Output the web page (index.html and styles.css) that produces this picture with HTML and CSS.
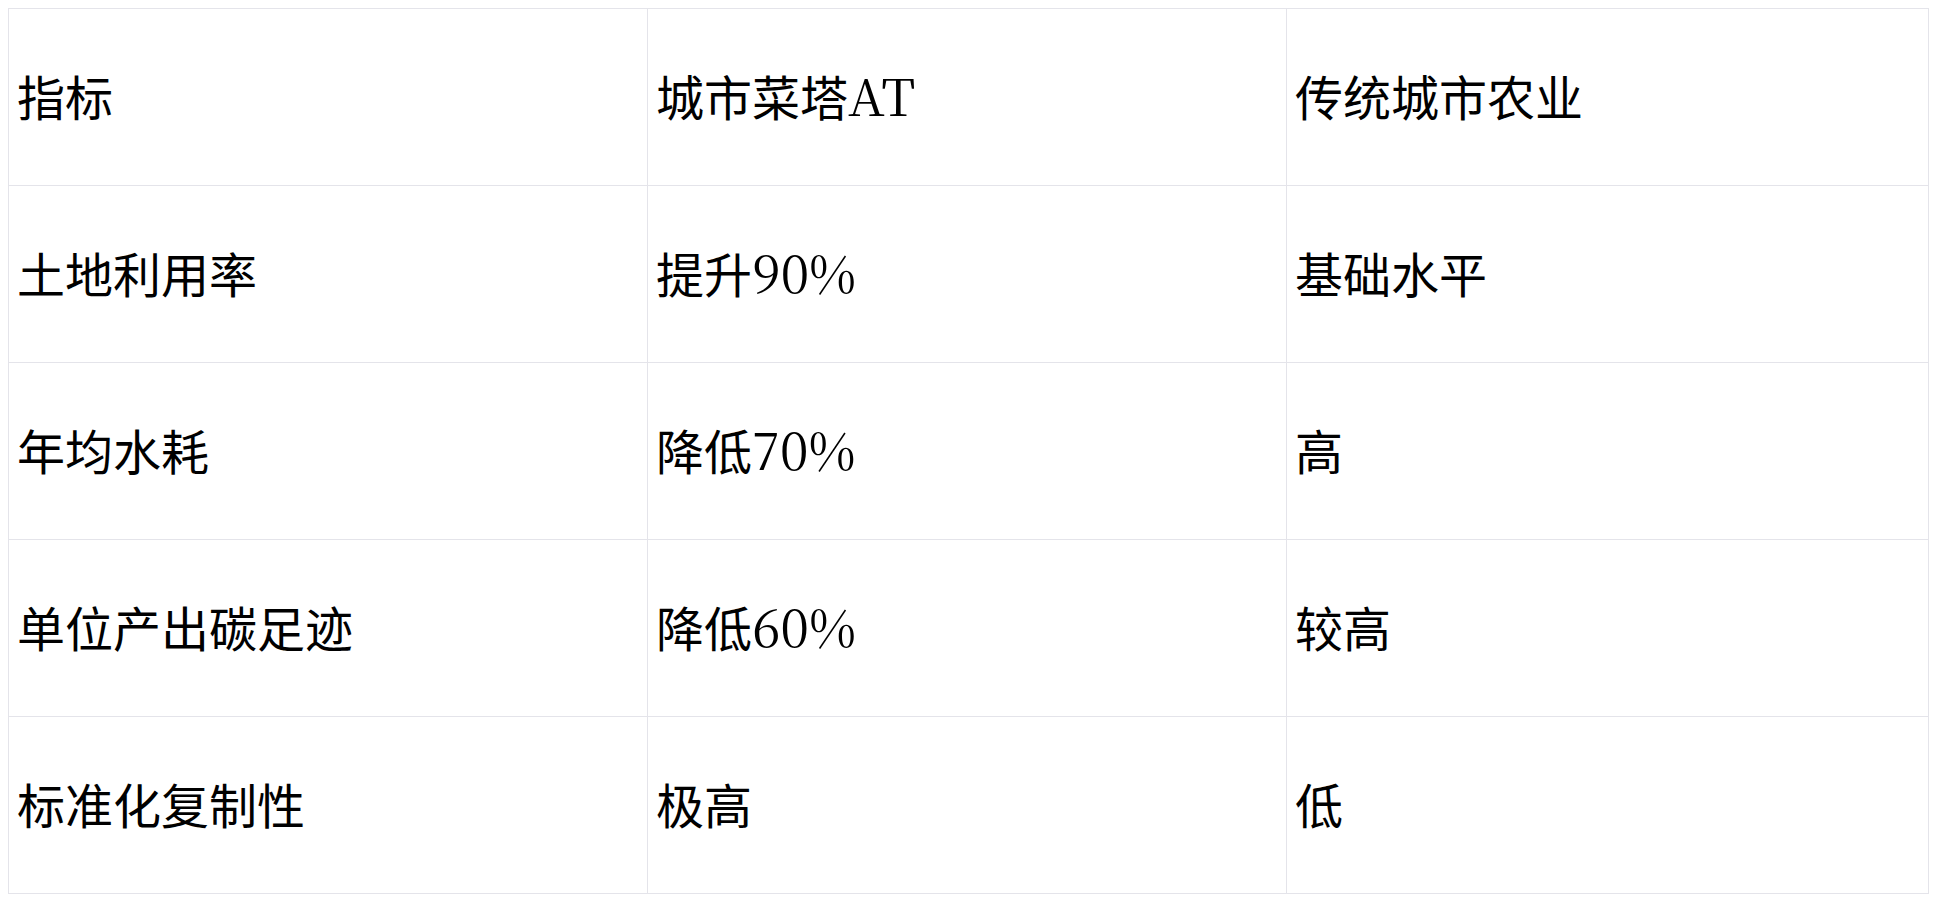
FILE: index.html
```html
<!DOCTYPE html>
<html lang="zh">
<head>
<meta charset="utf-8">
<link rel="stylesheet" href="styles.css">
</head>
<body>
<table class="cmp">
  <colgroup><col class="c1"><col class="c2"><col class="c3"></colgroup>
  <tr><td>指标</td><td>城市菜塔<span class="lat">AT</span></td><td>传统城市农业</td></tr>
  <tr><td>土地利用率</td><td>提升<span class="lat">90%</span></td><td>基础水平</td></tr>
  <tr><td>年均水耗</td><td>降低<span class="lat">70%</span></td><td>高</td></tr>
  <tr><td>单位产出碳足迹</td><td>降低<span class="lat">60%</span></td><td>较高</td></tr>
  <tr><td>标准化复制性</td><td>极高</td><td>低</td></tr>
</table>
</body>
</html>
```
FILE: styles.css
```css
html, body { background: #fff; }
body { margin: 8px; }
.cmp {
  width: 1921px;
  height: 886px;
  border-collapse: collapse;
  table-layout: fixed;
  font-family: "Noto Sans CJK SC", sans-serif;
  font-size: 48px;
  color: #000;
}
.c1 { width: 639px; }
.c2 { width: 639px; }
.cmp td {
  border: 1px solid #e4e4ea;
  padding: 0 8px 5px;
  line-height: 70px;
  vertical-align: middle;
  text-align: left;
}
.lat {
  font-family: "Noto Serif CJK SC", serif;
  font-size: 51px;
  line-height: 0;
}
```
